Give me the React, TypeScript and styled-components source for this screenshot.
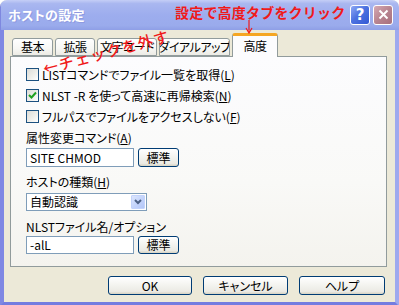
import React from "react";
import styled, { createGlobalStyle } from "styled-components";

const Global = createGlobalStyle`
  html, body { margin: 0; padding: 0; background: #ffffff; }
  body { font-family: "Noto Sans CJK JP", "Noto Sans", sans-serif; font-size: 12px; color: #000; }
  * { box-sizing: border-box; }
`;

const Window = styled.div`
  position: relative;
  width: 399px;
  height: 305px;
  display: flex;
  flex-direction: column;
  border-radius: 7px 7px 0 0;
  overflow: hidden;
  background: #ece9d8;
`;

const TitleBar = styled.div`
  height: 30px;
  flex: none;
  display: flex;
  align-items: center;
  justify-content: space-between;
  padding: 0 6px 1px 7px;
  background: linear-gradient(180deg, #c4cef6 0%, #a9b7f0 12%, #9dadee 50%, #9aabec 85%, #8f9fe6 100%);
  border-left: 1px solid #7e88e0;
`;

const TitleText = styled.span`
  color: #ffffff;
  font-weight: bold;
  font-size: 13px;
  line-height: 16px;
  letter-spacing: 0.3px;
  text-shadow: 1px 1px 0 #8e9ae0;
  font-feature-settings: "palt";
`;

const CaptionButtons = styled.div`
  display: flex;
  gap: 3px;
`;

const CaptionButton = styled.div<{ $kind: "help" | "close" }>`
  width: 20px;
  height: 20px;
  border: 1px solid #ffffff;
  border-radius: 3px;
  display: flex;
  align-items: center;
  justify-content: center;
  color: #ffffff;
  font-family: "DejaVu Sans", sans-serif;
  font-weight: bold;
  font-size: 15px;
  background: ${(p) =>
    p.$kind === "help"
      ? "linear-gradient(135deg, #8fa9f5 0%, #4c72e0 45%, #3358d4 100%)"
      : "linear-gradient(135deg, #d6a9b3 0%, #b88490 50%, #a8707d 100%)"};
`;

const Client = styled.div`
  flex: 1;
  display: flex;
  flex-direction: column;
  padding: 3px 8px 7px 6px;
  border-left: 4px solid #7f88e3;
  border-right: 4px solid #9ea9ee;
  border-bottom: 4px solid #737ce0;
`;

const TabStrip = styled.div`
  display: flex;
  align-items: flex-end;
  gap: 2px;
  height: 23px;
  padding-left: 2px;
  position: relative;
  z-index: 1;
`;

const Tab = styled.div<{ $w: number; $active?: boolean }>`
  flex: none;
  width: ${(p) => p.$w}px;
  height: ${(p) => (p.$active ? 24 : 18)}px;
  margin-bottom: ${(p) => (p.$active ? -1 : 0)}px;
  border: 1px solid #919b9c;
  border-bottom: ${(p) => (p.$active ? "none" : "1px solid #919b9c")};
  border-top: ${(p) => (p.$active ? "3px solid #f5a623" : "1px solid #919b9c")};
  border-radius: 3px 3px 0 0;
  background: ${(p) =>
    p.$active ? "#fcfcfe" : "linear-gradient(180deg, #ffffff 0%, #f7f7f4 60%, #ecebe5 100%)"};
  display: flex;
  align-items: center;
  justify-content: center;
  font-size: 12px;
  line-height: 14px;
  letter-spacing: -0.5px;
  font-feature-settings: "palt";
  padding-bottom: ${(p) => (p.$active ? 2 : 0)}px;
  white-space: nowrap;
  overflow: hidden;
`;

const Panel = styled.div`
  height: 211px;
  border: 1px solid #919b9c;
  background: linear-gradient(180deg, #fcfcfe 0%, #f9f9f7 60%, #f4f3ee 100%);
  padding: 7px 15px 0 15px;
  display: flex;
  flex-direction: column;
`;

const CheckRow = styled.label`
  height: 21px;
  display: flex;
  align-items: center;
  gap: 3px;
  font-feature-settings: "palt";
  white-space: nowrap;
`;

const CheckBox = styled.span`
  width: 13px;
  height: 13px;
  border: 1px solid #1c5180;
  background: linear-gradient(135deg, #dcdcd7 0%, #f0f0ec 60%, #ffffff 100%);
  display: flex;
  align-items: center;
  justify-content: center;
  flex: none;
`;

const Label = styled.div<{ $mt: number }>`
  margin-top: ${(p) => p.$mt}px;
  height: 14px;
  line-height: 14px;
  font-feature-settings: "palt";
  white-space: nowrap;
`;

const FieldRow = styled.div<{ $mt: number }>`
  margin-top: ${(p) => p.$mt}px;
  display: flex;
  gap: 4px;
  align-items: center;
`;

const TextBox = styled.div<{ $h: number }>`
  width: 108px;
  height: ${(p) => p.$h}px;
  border: 1px solid #7f9db9;
  background: #ffffff;
  padding-left: 3px;
  display: flex;
  align-items: center;
  line-height: 14px;
`;

const Button = styled.div<{ $w: number; $h: number }>`
  width: ${(p) => p.$w}px;
  height: ${(p) => p.$h}px;
  border: 1px solid #003c74;
  border-radius: 3px;
  background: linear-gradient(180deg, #ffffff 0%, #f4f4f0 45%, #ebeae4 85%, #d6d2c2 100%);
  display: flex;
  align-items: center;
  justify-content: center;
  line-height: 14px;
  font-feature-settings: "palt";
`;

const Select = styled.div`
  width: 121px;
  height: 18px;
  border: 1px solid #7f9db9;
  background: #ffffff;
  display: flex;
  align-items: stretch;
  padding: 1px;
`;

const SelectText = styled.div`
  flex: 1;
  padding-left: 2px;
  display: flex;
  align-items: center;
  line-height: 14px;
`;

const SelectArrow = styled.div`
  width: 14px;
  border-radius: 1px;
  background: linear-gradient(135deg, #dce6fd 0%, #c3d3fb 55%, #b2c6f7 100%);
  border: 1px solid #c3d3fb;
  display: flex;
  align-items: center;
  justify-content: center;
`;

const ButtonRow = styled.div`
  margin-top: 9px;
  display: flex;
  justify-content: flex-end;
  gap: 11px;
  padding-right: 2px;
`;

const U = styled.span`
  text-decoration: underline;
  text-underline-offset: 1px;
`;

const Note = styled.div`
  position: absolute;
  z-index: 5;
  color: #f01a1a;
  font-weight: bold;
  white-space: nowrap;
`;

const TopNote = styled(Note)`
  left: 175px;
  top: 3px;
  font-size: 14px;
  line-height: 18px;
  letter-spacing: 0.2px;
`;

const SlantNote = styled(Note)`
  left: 41px;
  top: 43px;
  font-size: 15px;
  line-height: 18px;
  font-weight: 500;
  transform: rotate(-15deg);
  transform-origin: center;
  letter-spacing: 1.3px;
`;

const ArrowSvg = styled.svg`
  position: absolute;
  z-index: 5;
  left: 244px;
  top: 20px;
`;

const Check = () => (
  <svg width="9" height="9" viewBox="0 0 9 9">
    <path d="M1 4 L3.5 6.5 L8 1.5" stroke="#21a121" strokeWidth="2" fill="none" />
  </svg>
);

export default function App() {
  return (
    <>
      <Global />
      <Window>
        <TitleBar>
          <TitleText>ホストの設定</TitleText>
          <CaptionButtons>
            <CaptionButton $kind="help">?</CaptionButton>
            <CaptionButton $kind="close">
              <svg width="11" height="11" viewBox="0 0 11 11">
                <path d="M1.5 1.5 L9.5 9.5 M9.5 1.5 L1.5 9.5" stroke="#ffffff" strokeWidth="2" />
              </svg>
            </CaptionButton>
          </CaptionButtons>
        </TitleBar>
        <Client>
          <TabStrip>
            <Tab $w={41}>基本</Tab>
            <Tab $w={40}>拡張</Tab>
            <Tab $w={60}>文字コード</Tab>
            <Tab $w={71}>ダイアルアップ</Tab>
            <Tab $w={46} $active>高度</Tab>
          </TabStrip>
          <Panel>
            <CheckRow>
              <CheckBox />
              <span>LISTコマンドでファイル一覧を取得(<U>L</U>)</span>
            </CheckRow>
            <CheckRow>
              <CheckBox>
                <Check />
              </CheckBox>
              <span>NLST -R を使って高速に再帰検索(<U>N</U>)</span>
            </CheckRow>
            <CheckRow>
              <CheckBox />
              <span>フルパスでファイルをアクセスしない(<U>F</U>)</span>
            </CheckRow>
            <Label $mt={4}>属性変更コマンド(<U>A</U>)</Label>
            <FieldRow $mt={3}>
              <TextBox $h={19}>SITE CHMOD</TextBox>
              <Button $w={41} $h={19}>標準</Button>
            </FieldRow>
            <Label $mt={8}>ホストの種類(<U>H</U>)</Label>
            <FieldRow $mt={4}>
              <Select>
                <SelectText>自動認識</SelectText>
                <SelectArrow>
                  <svg width="8" height="6" viewBox="0 0 8 6">
                    <path d="M1 1 L4 4 L7 1" stroke="#4d6185" strokeWidth="2" fill="none" />
                  </svg>
                </SelectArrow>
              </Select>
            </FieldRow>
            <Label $mt={9}>NLSTファイル名/オプション</Label>
            <FieldRow $mt={2}>
              <TextBox $h={18}>-alL</TextBox>
              <Button $w={41} $h={18}>標準</Button>
            </FieldRow>
          </Panel>
          <ButtonRow>
            <Button $w={84} $h={19}>OK</Button>
            <Button $w={85} $h={19}>キャンセル</Button>
            <Button $w={86} $h={19}>ヘルプ</Button>
          </ButtonRow>
        </Client>
        <TopNote>設定で高度タブをクリック</TopNote>
        <ArrowSvg width="10" height="14" viewBox="0 0 10 14">
          <path d="M5 0 L5 12" stroke="#f01a1a" strokeWidth="1.2" />
          <path d="M2 8 L5 13 L8 8" stroke="#f01a1a" strokeWidth="1.2" fill="none" />
        </ArrowSvg>
        <SlantNote>←チェックを外す</SlantNote>
      </Window>
    </>
  );
}
